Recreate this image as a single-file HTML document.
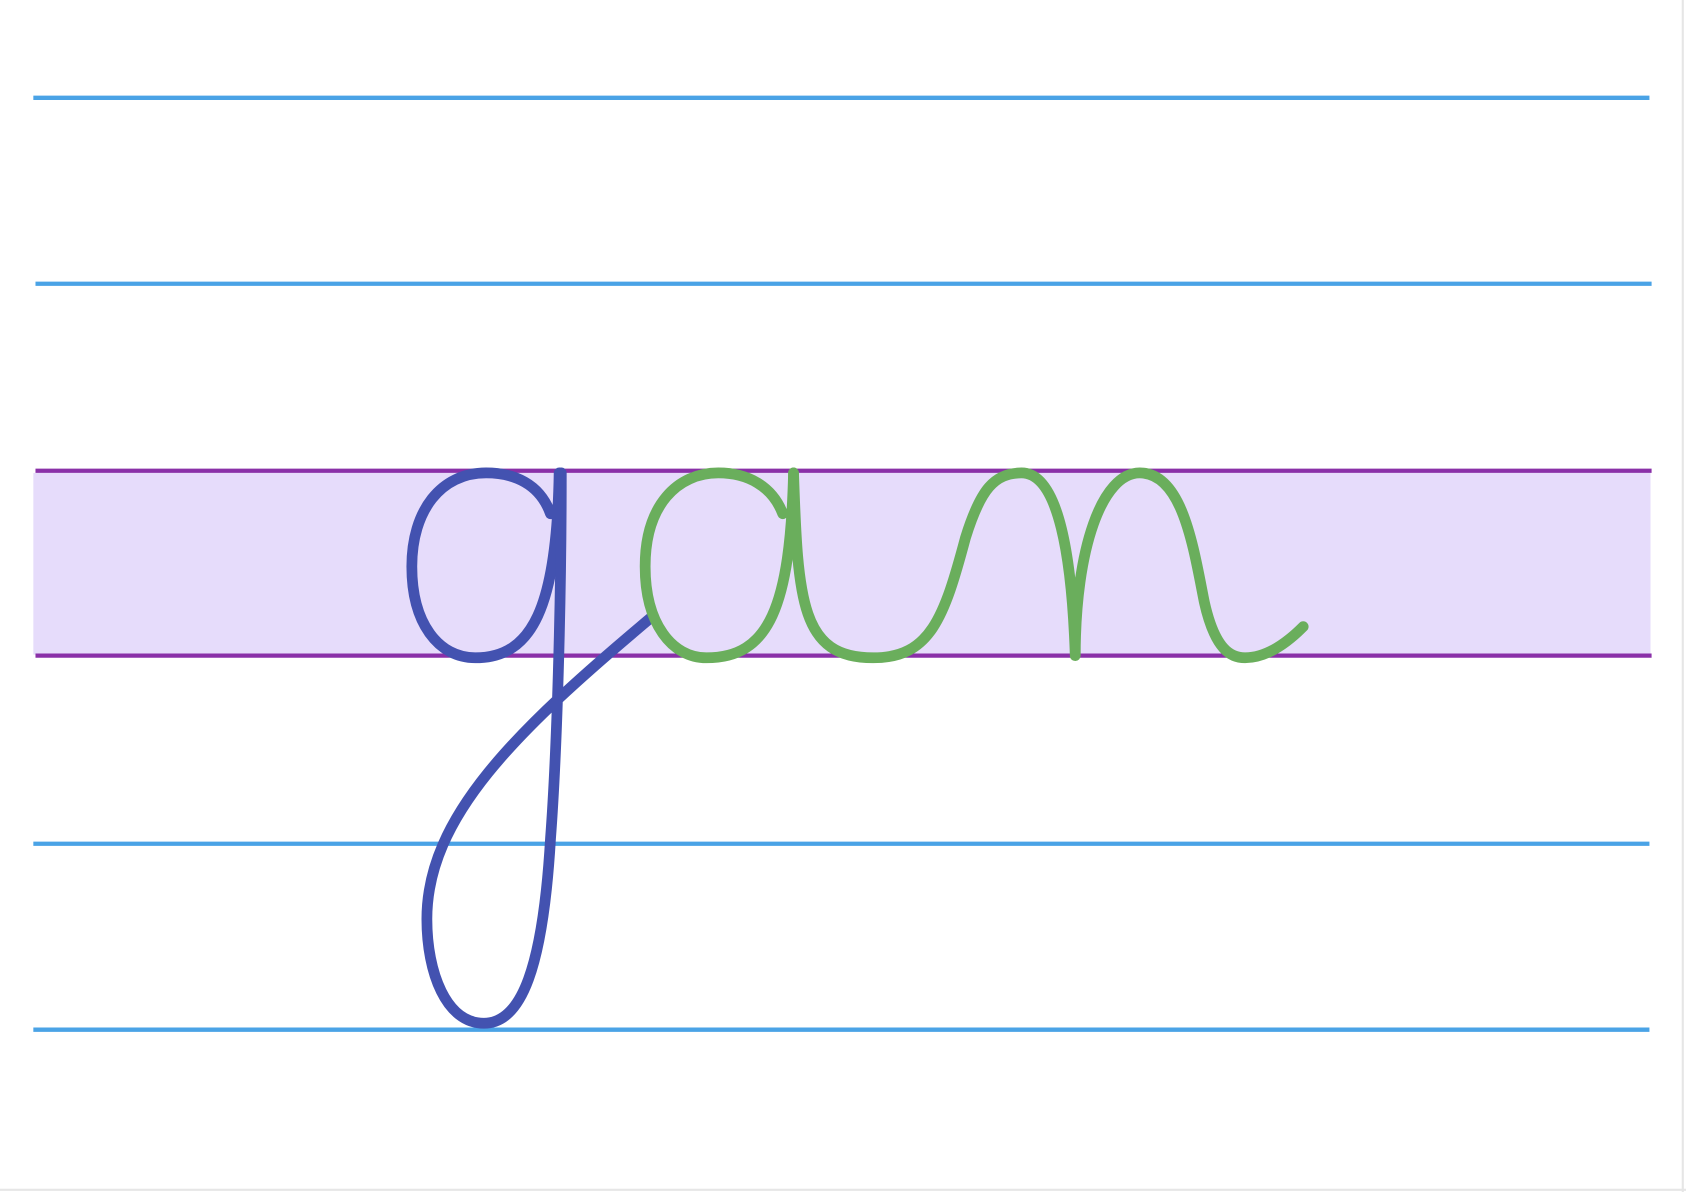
<!DOCTYPE html>
<html><head><meta charset="utf-8"><style>
html,body{margin:0;padding:0;background:#fff;}
svg{display:block;}
</style></head><body>
<svg width="1686" height="1192" viewBox="0 0 1568 1109" preserveAspectRatio="none" xmlns="http://www.w3.org/2000/svg">
<rect x="0" y="0" width="1568" height="1109" fill="#fff"/>
<line x1="1565" y1="0" x2="1565" y2="1109" stroke="#e6e6e6" stroke-width="2"/>
<line x1="0" y1="1107" x2="1568" y2="1107" stroke="#e6e6e6" stroke-width="2"/>
<rect x="31" y="440" width="1504" height="169" fill="#e6dcfb"/>
<line x1="31" y1="91" x2="1534" y2="91" stroke="#4aa3e6" stroke-width="4"/>
<line x1="33" y1="264" x2="1536" y2="264" stroke="#4aa3e6" stroke-width="4"/>
<line x1="33" y1="438" x2="1536" y2="438" stroke="#8a30a8" stroke-width="4"/>
<line x1="33" y1="610" x2="1536" y2="610" stroke="#8a30a8" stroke-width="4"/>
<line x1="31" y1="785" x2="1534" y2="785" stroke="#4aa3e6" stroke-width="4"/>
<line x1="31" y1="958" x2="1534" y2="958" stroke="#4aa3e6" stroke-width="4"/>
<g fill="none" stroke="#4352b0" stroke-width="10" stroke-linecap="round" stroke-linejoin="round">
<path d="M512,478 C502,450 478,440 452,440 C410,440 383,475 383,527 C383,580 408,612 442,612 C495,612 518,565 520,440"/>
<path d="M522,440 C522,560 518,700 512,780 C505,900 485,952 450,952 C415,952 397,905 397,855 C397,760 480,680 605,575"/>
</g>
<g fill="none" stroke="#6aae5c" stroke-width="10" stroke-linecap="round" stroke-linejoin="round">
<path d="M728,478 C718,452 695,440 668,440 C630,440 600,470 600,527 C600,580 625,612 657,612 C715,612 735,565 738,440"/>
<path d="M738,440 C742,560 745,612 812,612 C865,612 878,575 898,500 C912,455 925,440 950,440 C985,440 997,520 1000,610 C1000,510 1025,440 1060,440 C1100,440 1110,510 1120,560 C1130,605 1145,612 1158,612 C1180,612 1200,595 1212,583"/>
</g>
</svg>
</body></html>
